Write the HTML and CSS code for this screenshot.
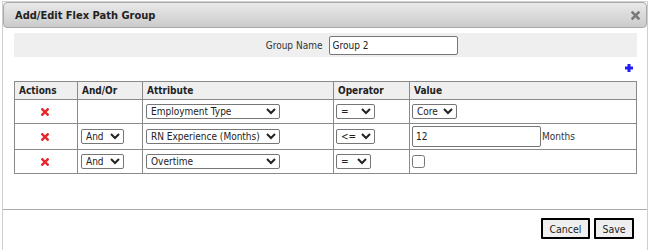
FILE: index.html
```html
<!DOCTYPE html>
<html>
<head>
    <title>Add/Edit Flex Path Group</title>
    <link rel="stylesheet" href="styles.css">
</head>
<body>
    <div class="dialog">
        <div class="titlebar">
            <span class="title">Add/Edit Flex Path Group</span>
            <svg class="close-icon" width="9" height="9" viewBox="0 0 9 9">
                <path d="M1.5 1.5 L7.5 7.5 M7.5 1.5 L1.5 7.5" stroke="#7a7a7a" stroke-width="2.6" stroke-linecap="square"/>
            </svg>
        </div>
        <div class="content">
            <div class="name-band">
                <div class="name-label">Group Name</div>
                <div class="name-field"><input class="text-input name-input" type="text" value="Group 2"></div>
            </div>
            <div class="toolbar">
                <svg class="add-icon" width="8" height="8" viewBox="0 0 8 8">
                    <path d="M4 0 V8 M0 4 H8" stroke="#1f1ff5" stroke-width="3"/>
                </svg>
            </div>
            <table class="rules">
                <thead>
                    <tr>
                        <th class="col-actions">Actions</th>
                        <th class="col-andor">And/Or</th>
                        <th class="col-attr">Attribute</th>
                        <th class="col-op">Operator</th>
                        <th class="col-value">Value</th>
                    </tr>
                </thead>
                <tbody>
                    <tr>
                        <td class="cell-action">
                            <svg class="del-icon" width="8" height="8" viewBox="0 0 8 8">
                                <path d="M1.3 1.3 L6.7 6.7 M6.7 1.3 L1.3 6.7" stroke="#e8262b" stroke-width="2.4" stroke-linecap="square"/>
                            </svg>
                        </td>
                        <td></td>
                        <td><select class="sel sel-attr"><option>Employment Type</option></select></td>
                        <td><select class="sel sel-op"><option>=</option><option>&lt;=</option></select></td>
                        <td><select class="sel sel-core"><option>Core</option></select></td>
                    </tr>
                    <tr>
                        <td class="cell-action">
                            <svg class="del-icon" width="8" height="8" viewBox="0 0 8 8">
                                <path d="M1.3 1.3 L6.7 6.7 M6.7 1.3 L1.3 6.7" stroke="#e8262b" stroke-width="2.4" stroke-linecap="square"/>
                            </svg>
                        </td>
                        <td><select class="sel sel-andor"><option>And</option></select></td>
                        <td><select class="sel sel-attr"><option>RN Experience (Months)</option></select></td>
                        <td><select class="sel sel-op"><option>&lt;=</option></select></td>
                        <td><input class="text-input value-input" type="text" value="12"><span class="unit">Months</span></td>
                    </tr>
                    <tr>
                        <td class="cell-action">
                            <svg class="del-icon" width="8" height="8" viewBox="0 0 8 8">
                                <path d="M1.3 1.3 L6.7 6.7 M6.7 1.3 L1.3 6.7" stroke="#e8262b" stroke-width="2.4" stroke-linecap="square"/>
                            </svg>
                        </td>
                        <td><select class="sel sel-andor"><option>And</option></select></td>
                        <td><select class="sel sel-attr"><option>Overtime</option></select></td>
                        <td><select class="sel sel-op sel-op-short"><option>=</option></select></td>
                        <td><input class="check" type="checkbox"></td>
                    </tr>
                </tbody>
            </table>
        </div>
        <div class="footer">
            <button class="btn btn-cancel">Cancel</button>
            <button class="btn btn-save">Save</button>
        </div>
    </div>
</body>
</html>
```

FILE: styles.css
```css
html, body {
    margin: 0;
    background: #fff;
    overflow: hidden;
}
body {
    font-family: "DejaVu Sans Condensed", "DejaVu Sans", sans-serif;
    font-stretch: condensed;
    font-size: 10px;
    color: #333;
}
.dialog {
    margin: 1px 0 0 2px;
    width: 644px;
    height: 249px;
    overflow: hidden;
    border: 1px solid #cfcfcf;
    border-bottom: none;
    background: #fff;
}
.titlebar {
    height: 24px;
    border: 1px solid #a9a9a9;
    border-radius: 4px;
    background: linear-gradient(#e9e9e9, #cbcbcb);
    display: flex;
    align-items: center;
    justify-content: space-between;
    padding: 0 6px 0 11px;
}
.title {
    font-weight: bold;
    font-size: 11px;
    color: #222;
}
.close-icon {
    display: block;
}
.content {
    padding: 5px 10px 0 11px;
}
.name-band {
    display: flex;
    height: 24px;
    align-items: center;
    background: #efefef;
}
.name-label {
    flex: 1;
    text-align: right;
    padding-right: 4px;
}
.name-field {
    flex: 1;
    padding-left: 2px;
}
.text-input {
    box-sizing: border-box;
    font: inherit;
    color: #222;
    border: 1px solid #767676;
    border-radius: 2px;
    padding: 0 3px;
    margin: 0;
    background: #fff;
    vertical-align: middle;
}
.name-input {
    width: 129px;
    height: 19px;
}
.toolbar {
    height: 24px;
    display: flex;
    justify-content: flex-end;
    align-items: flex-start;
    padding-right: 4px;
}
.add-icon {
    display: block;
    margin-top: 7px;
}
.rules {
    width: 623px;
    border-collapse: collapse;
    table-layout: fixed;
    margin-bottom: 35px;
}
.rules th,
.rules td {
    border: 1px solid #8a8a8a;
}
.rules th {
    background: #efefef;
    color: #222;
    font-weight: bold;
    text-align: left;
    height: 17px;
    padding: 0 4px;
}
.rules td {
    height: 19px;
    padding: 2px 2px 2px 3px;
    vertical-align: middle;
}
.col-actions { width: 54px; }
.col-andor { width: 56px; }
.col-attr { width: 182px; }
.col-op { width: 67px; }
.cell-action {
    text-align: center;
}
.del-icon {
    display: inline-block;
    vertical-align: middle;
    margin-right: 4px;
}
.sel {
    box-sizing: border-box;
    font: inherit;
    color: #222;
    height: 15px;
    margin: 0;
    padding: 0;
    vertical-align: middle;
    border: 1px solid #767676;
    border-radius: 2px;
    background: #fff;
}
.sel-attr { width: 134px; }
.sel-andor { width: 43px; }
.sel-op { width: 39px; margin-left: -1px; }
.sel-op-short { width: 35px; }
.sel-core { width: 45px; margin-left: -1px; }
.value-input {
    width: 129px;
    height: 21px;
    margin-left: -1px;
}
.unit {
    vertical-align: middle;
    margin-left: 1px;
}
.check {
    width: 13px;
    height: 13px;
    margin: 0 0 0 -1px;
    vertical-align: middle;
}
.footer {
    border-top: 1px solid #ababab;
    padding: 8px 13px 0 0;
    display: flex;
    justify-content: flex-end;
    gap: 4px;
}
.btn {
    box-sizing: border-box;
    height: 21px;
    font: inherit;
    font-size: 10.5px;
    color: #222;
    background: #efefef;
    border: 2px solid #000;
    border-radius: 1px;
    padding: 0;
}
.btn-cancel { width: 49px; }
.btn-save { width: 40px; }
```
